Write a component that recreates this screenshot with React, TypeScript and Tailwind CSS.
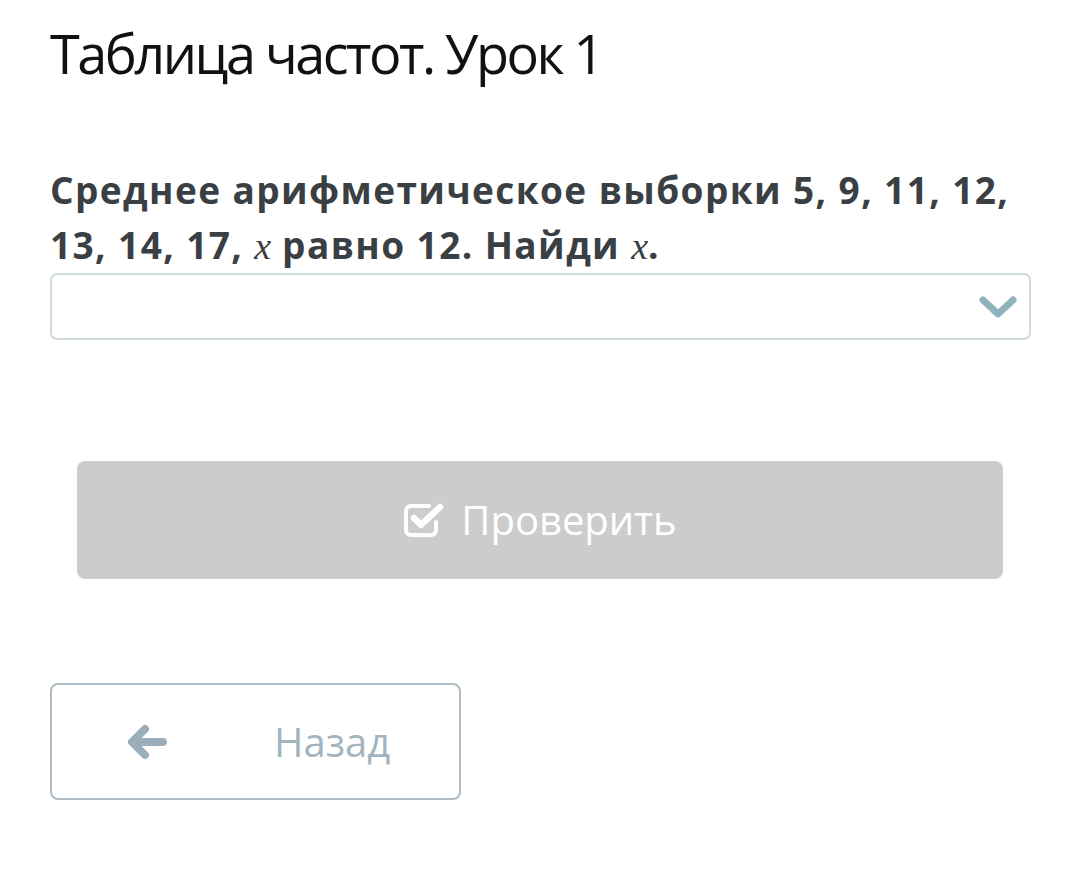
import React from "react";

const Chevron = () => (
  <svg width="38" height="26" viewBox="0 0 38 26" className="text-[#8fb3bd]">
    <path
      d="M4 6 L19 20 L34 6"
      fill="none"
      stroke="currentColor"
      strokeWidth="7"
      strokeLinecap="round"
      strokeLinejoin="round"
    />
  </svg>
);

const CheckSquare = () => (
  <svg width="42" height="40" viewBox="0 0 42 40" className="text-white">
    <path
      d="M33 22 V30 a5 5 0 0 1 -5 5 H8 a5 5 0 0 1 -5 -5 V11 a5 5 0 0 1 5 -5 H26"
      fill="none"
      stroke="currentColor"
      strokeWidth="4"
      strokeLinecap="round"
    />
    <path
      d="M11 18 L18 25 L37 7"
      fill="none"
      stroke="currentColor"
      strokeWidth="6.5"
      strokeLinecap="round"
      strokeLinejoin="round"
    />
  </svg>
);

const ArrowLeft = () => (
  <svg width="40" height="36" viewBox="0 0 40 36" className="text-[#9aaebb]">
    <path
      d="M17 5 L4 18 L17 31 M5 18 H35"
      fill="none"
      stroke="currentColor"
      strokeWidth="8"
      strokeLinecap="round"
      strokeLinejoin="round"
    />
  </svg>
);

const MathX = () => (
  <span className="font-['Liberation_Serif',serif] font-normal italic text-[38px] leading-none tracking-normal">x</span>
);

export default function App() {
  return (
    <div className="min-h-[887px] w-[1080px] bg-white font-['Open_Sans',sans-serif]">
      <div className="px-[50px] pt-[20px]">
        <h1 className="text-[54px] leading-[66px] font-normal tracking-[-2.5px] text-[#111]">
          Таблица частот. Урок 1
        </h1>

        <p className="mt-[76px] text-[37px] leading-[55px] font-bold tracking-[1.4px] text-[#3a3f44]">
          Среднее арифметическое выборки 5, 9, 11, 12, 13, 14, 17, <MathX /> равно 12. Найди <MathX />.
        </p>

        <div className="mt-[1px] flex h-[67px] w-[981px] items-center justify-end rounded-[7px] border-2 border-[#cfdadd] pr-[12px]">
          <Chevron />
        </div>

        <div className="mt-[121px] ml-[27px] flex h-[118px] w-[926px] items-center justify-center gap-[16px] rounded-[8px] bg-[#cccccc]">
          <CheckSquare />
          <span className="text-[40px] text-white">Проверить</span>
        </div>

        <div className="mt-[104px] flex h-[117px] w-[411px] items-center rounded-[8px] border-2 border-[#aebbc2] pl-[76px]">
          <ArrowLeft />
          <span className="ml-[106px] text-[40px] text-[#a3b4bf]">Назад</span>
        </div>
      </div>
    </div>
  );
}
